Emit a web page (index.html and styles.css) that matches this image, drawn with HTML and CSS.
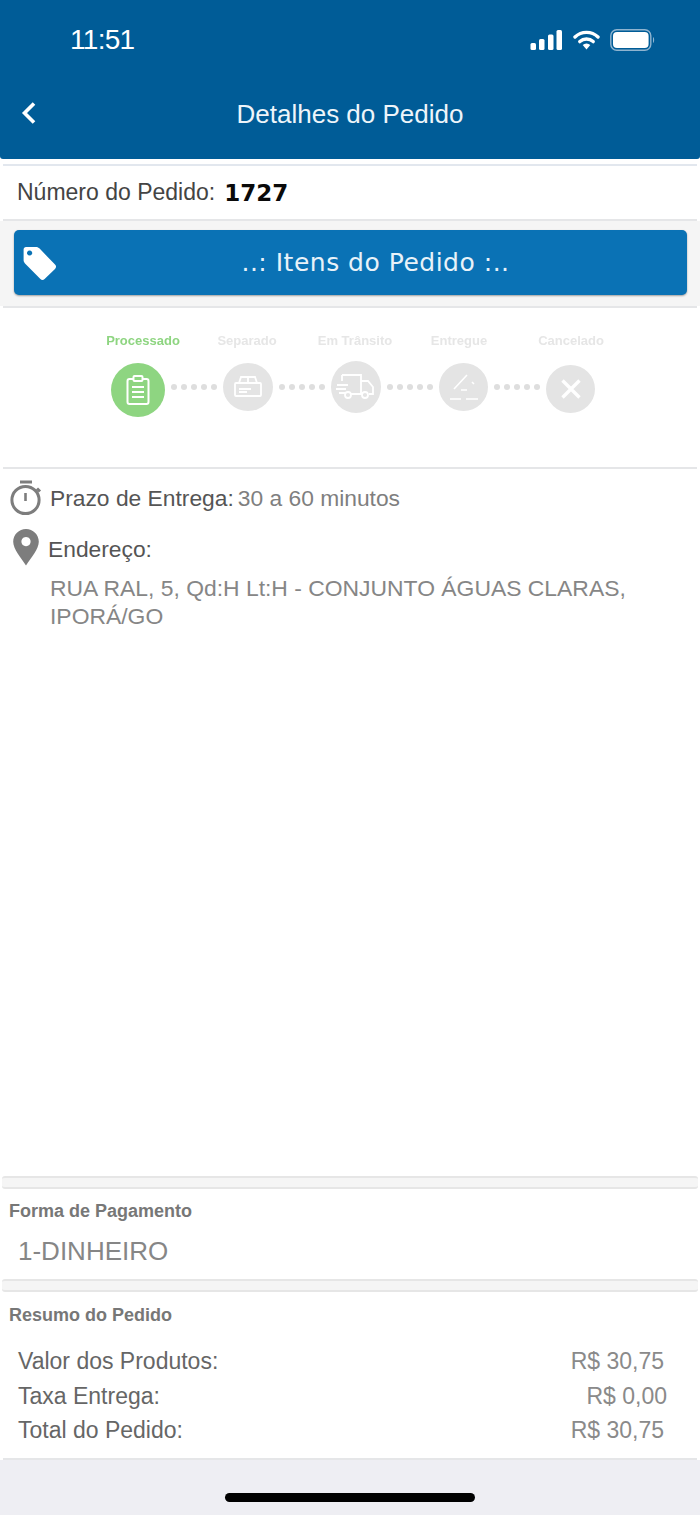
FILE: index.html
```html
<!doctype html>
<html>

<head>
  <title>Detalhes do Pedido</title>
  <meta charset="utf-8">
  <meta name="viewport" content="width=device-width">
  <link rel="stylesheet" href="styles.css">
</head>

<body>
  <div class="page">
    <div class="topbar">
      <div class="statusbar">
        <span class="clock">11:51</span>
        <div class="statusicons">
          <svg class="signal" width="33" height="20" viewBox="0 0 33 20">
            <rect x="0.5" y="13" width="5.5" height="7" rx="1.5" fill="#fff"/>
            <rect x="9" y="9" width="5.5" height="11" rx="1.5" fill="#fff"/>
            <rect x="18" y="4.5" width="5.5" height="15.5" rx="1.5" fill="#fff"/>
            <rect x="26.5" y="0" width="5.5" height="20" rx="1.5" fill="#fff"/>
          </svg>
          <svg class="wifi" width="27" height="20" viewBox="0 0 27 20">
            <path d="M2 7 A16.5 16.5 0 0 1 25 7" fill="none" stroke="#fff" stroke-width="3.4" stroke-linecap="round"/>
            <path d="M6.8 11.6 A10 10 0 0 1 20.2 11.6" fill="none" stroke="#fff" stroke-width="3.4" stroke-linecap="round"/>
            <path d="M9.7 15 L13.5 19.5 L17.3 15 A5.5 5.5 0 0 0 9.7 15 Z" fill="#fff"/>
          </svg>
          <svg class="battery" width="45" height="22" viewBox="0 0 45 22">
            <rect x="0.8" y="0.8" width="40" height="20.4" rx="6" fill="none" stroke="#8fb4d0" stroke-width="1.4"/>
            <rect x="3" y="3" width="35.6" height="16" rx="4" fill="#fff"/>
            <path d="M43 8 C44.5 8.5 44.5 13.5 43 14 Z" fill="#8fb4d0"/>
          </svg>
        </div>
      </div>
      <div class="navbar">
        <svg class="back" width="16" height="24" viewBox="0 0 16 24">
          <path d="M13 2.5 L3.5 12 L13 21.5" fill="none" stroke="#fff" stroke-width="3.6"/>
        </svg>
        <span class="navtitle">Detalhes do Pedido</span>
      </div>
    </div>

    <div class="rule first"></div>
    <div class="orderrow">
      <span class="orderlabel">Número do Pedido:</span>
      <span class="ordernum">1727</span>
    </div>
    <div class="rule"></div>

    <div class="buttonband">
      <div class="itemsbtn">
        <svg class="tag" width="36" height="36" viewBox="0 0 36 36">
          <path fill-rule="evenodd" fill="#fff" d="M4 2 H14 C15.5 2 16.6 2.6 17.6 3.6 L33 19.6 C34.4 21 34.4 22.6 33 24 L22.6 34 C21.2 35.4 19.6 35.2 18.4 34 L3 18.4 C2 17.4 1.6 16.2 1.6 15 V4.4 C1.6 3 2.6 2 4 2 Z M7.6 5.4 A2.6 2.6 0 1 0 7.62 5.4 Z"/>
        </svg>
        <span class="btntext">..: Itens do Pedido :..</span>
      </div>
    </div>
    <div class="rule"></div>

    <div class="steps">
      <div class="steplabels">
        <span class="steplabel on">Processado</span>
        <span class="steplabel">Separado</span>
        <span class="steplabel">Em Trânsito</span>
        <span class="steplabel">Entregue</span>
        <span class="steplabel">Cancelado</span>
      </div>
      <div class="track">
        <div class="circle active">
          <svg width="26" height="32" viewBox="0 0 26 32" fill="none" stroke="#fff" stroke-width="2">
            <rect x="2.5" y="5" width="21" height="25" rx="2"/>
            <rect x="8.5" y="2" width="9" height="5" rx="1" fill="#8ed581"/>
            <path d="M7 13 H19 M7 18 H19 M7 23 H19"/>
          </svg>
        </div>
        <div class="dots"><i></i><i></i><i></i><i></i><i></i></div>
        <div class="circle">
          <svg width="30" height="24" viewBox="0 0 30 24" fill="none" stroke="#fff" stroke-width="1.8">
            <path d="M6 8 L8 2 H22 L24 8"/>
            <rect x="2" y="8" width="26" height="13" rx="1"/>
            <path d="M15 2 V8 M6 14 H18 M6 17 H14"/>
          </svg>
        </div>
        <div class="dots"><i></i><i></i><i></i><i></i><i></i></div>
        <div class="circle truck">
          <svg width="40" height="28" viewBox="0 0 40 28" fill="none" stroke="#fff" stroke-width="1.8">
            <path d="M6 2 H25 V21 H15 M6 2 V8"/>
            <path d="M25 8 H32 L37 14 V21 H33"/>
            <path d="M1 12 H12 M0 16 H10 M3 20 H9"/>
            <circle cx="12" cy="22" r="3"/>
            <circle cx="29" cy="22" r="3"/>
          </svg>
        </div>
        <div class="dots"><i></i><i></i><i></i><i></i><i></i></div>
        <div class="circle narrow">
          <svg width="32" height="30" viewBox="0 0 32 30" fill="none" stroke="#fff" stroke-width="1.6">
            <path d="M6 17 L19 3 M24 10 L26 12 M13 18 H19"/>
            <path d="M2 27 H13 M18 27 H30"/>
          </svg>
        </div>
        <div class="dots"><i></i><i></i><i></i><i></i><i></i></div>
        <div class="circle cancel">
          <svg width="24" height="24" viewBox="0 0 24 24" fill="none" stroke="#fff" stroke-width="3.4">
            <path d="M3.5 3.5 L20.5 20.5 M20.5 3.5 L3.5 20.5"/>
          </svg>
        </div>
      </div>
    </div>
    <div class="rule"></div>

    <div class="info">
      <div class="inforow">
        <svg class="timer" width="36" height="36" viewBox="0 0 36 36" fill="none" stroke="#7d7d7d">
          <path d="M12 2 H24" stroke-width="3"/>
          <circle cx="17.5" cy="20" r="13.6" stroke-width="3"/>
          <path d="M17.5 13 V21" stroke-width="2.6"/>
          <path d="M29 8.5 L32 11.5" stroke-width="3"/>
        </svg>
        <span class="infolabel">Prazo de Entrega:</span>
        <span class="infovalue">30 a 60 minutos</span>
      </div>
      <div class="inforow addressrow">
        <svg class="pin" width="28" height="38" viewBox="0 0 28 38">
          <path fill-rule="evenodd" fill="#7d7d7d" d="M14 1 C21 1 26.8 6.6 26.8 13.8 C26.8 21 19 30 14 37.5 C9 30 1.2 21 1.2 13.8 C1.2 6.6 7 1 14 1 Z M14 9 A4.6 4.6 0 1 0 14.01 9 Z"/>
        </svg>
        <span class="infolabel">Endereço:</span>
      </div>
      <div class="address">RUA RAL, 5, Qd:H Lt:H - CONJUNTO ÁGUAS CLARAS, IPORÁ/GO</div>
    </div>

    <div class="separator"></div>
    <div class="section payment">
      <div class="sectiontitle">Forma de Pagamento</div>
      <div class="paymethod">1-DINHEIRO</div>
    </div>
    <div class="separator"></div>
    <div class="section summary">
      <div class="sectiontitle">Resumo do Pedido</div>
      <div class="sumrows">
        <div class="sumrow"><span>Valor dos Produtos:</span><span class="price">R$ 30,75</span></div>
        <div class="sumrow"><span>Taxa Entrega:</span><span class="price shifted">R$ 0,00</span></div>
        <div class="sumrow"><span>Total do Pedido:</span><span class="price">R$ 30,75</span></div>
      </div>
    </div>
    <div class="rule"></div>

    <div class="homearea">
      <div class="homebar"></div>
    </div>
  </div>
</body>

</html>
```

FILE: styles.css
```css
html,
body {
  margin: 0;
  padding: 0;
  background-color: #fff;
}

.page {
  display: flex;
  flex-direction: column;
  width: 700px;
  height: 1515px;
  overflow: hidden;
  font-family: "Liberation Sans", Arial, sans-serif;
}

/* header */
.topbar {
  height: 159px;
  flex: none;
  background-color: #005c97;
  color: white;
  border-radius: 0 0 3px 3px;
}

.statusbar {
  display: flex;
  justify-content: space-between;
  align-items: center;
  height: 40px;
  padding: 20px 45px 0 70px;
}

.clock {
  font-size: 28px;
  letter-spacing: -0.7px;
}

.statusicons {
  display: flex;
  align-items: center;
  gap: 10px;
}

.navbar {
  position: relative;
  display: flex;
  justify-content: center;
  align-items: center;
  height: 36px;
  margin-top: 36px;
}

.back {
  position: absolute;
  left: 21px;
  top: 5px;
}

.navtitle {
  font-size: 26px;
  color: #eef5fa;
}

/* rules and separators */
.rule {
  flex: none;
  height: 2px;
  margin: 0 3px;
  background-color: #e5e6e8;
}

.rule.first {
  margin-top: 5px;
  background-color: #e2e7ee;
}

.separator {
  flex: none;
  height: 9px;
  margin: 0 2px;
  background-color: #f5f5f5;
  border-top: 2px solid #e6e6e6;
  border-bottom: 2px solid #e6e6e6;
  border-radius: 3px;
}

/* order number */
.orderrow {
  display: flex;
  align-items: center;
  gap: 9px;
  height: 53px;
  padding-left: 17px;
  flex: none;
}

.orderlabel {
  font-size: 23px;
  color: #444;
}

.ordernum {
  font-family: "DejaVu Sans", Verdana, sans-serif;
  font-weight: bold;
  font-size: 23px;
  color: #0a0a0a;
}

/* items button */
.buttonband {
  flex: none;
  height: 85px;
  padding: 9px 13px 0 14px;
  box-sizing: border-box;
  background-color: #f5f5f5;
}

.itemsbtn {
  position: relative;
  display: flex;
  justify-content: center;
  align-items: center;
  height: 65px;
  padding-left: 50px;
  box-sizing: border-box;
  background-color: #0a72b5;
  border-radius: 5px;
  box-shadow: 0 1px 2px rgba(0, 0, 0, 0.35);
}

.tag {
  position: absolute;
  left: 8px;
  top: 15px;
}

.btntext {
  font-family: "DejaVu Sans", Verdana, sans-serif;
  font-size: 25px;
  letter-spacing: 0.5px;
  color: #e8f2f9;
}

/* progress steps */
.steps {
  flex: none;
  height: 159px;
  padding-top: 25px;
  box-sizing: border-box;
}

.steplabels {
  display: grid;
  grid-template-columns: 104px 104px 112px 96px 128px;
  padding-left: 91px;
  height: 16px;
}

.steplabel {
  text-align: center;
  font-size: 13px;
  line-height: 16px;
  font-weight: bold;
  color: #e6e6e6;
  filter: blur(0.4px);
}

.steplabel.on {
  color: #8ed581;
}

.track {
  display: flex;
  align-items: flex-start;
  margin-top: 14px;
  padding-left: 111px;
  filter: blur(0.4px);
}

.circle {
  display: flex;
  justify-content: center;
  align-items: center;
  flex: none;
  width: 50px;
  height: 48px;
  border-radius: 50%;
  background-color: #e4e4e4;
}

.circle.active {
  width: 54px;
  height: 54px;
  background-color: #8ed581;
}

.circle.truck {
  height: 52px;
  margin-top: -2px;
}

.circle.narrow {
  width: 49px;
}

.circle.cancel {
  width: 49px;
  height: 48px;
  margin-top: 2px;
}

.dots {
  display: flex;
  justify-content: space-between;
  flex: none;
  width: 46px;
  margin: 21px 6px 0 6px;
}

.dots i {
  display: block;
  width: 6px;
  height: 6px;
  border-radius: 50%;
  background-color: #dedede;
}

/* delivery info */
.info {
  flex: 1;
  padding: 10px 70px 0 8px;
}

.inforow {
  display: flex;
  align-items: center;
  height: 38px;
}

.timer {
  flex: none;
  margin-right: 6px;
}

.infolabel {
  font-size: 22.8px;
  color: #555;
}

.infovalue {
  margin-left: 4px;
  font-size: 22.8px;
  color: #7f7f7f;
}

.addressrow {
  margin-top: 13px;
}

.pin {
  flex: none;
  margin: -5px 8px 0 4px;
}

.address {
  margin-top: 6px;
  padding-left: 42px;
  font-size: 22.9px;
  line-height: 28px;
  color: #868686;
}

/* payment and summary */
.section {
  flex: none;
  box-sizing: border-box;
}

.payment {
  height: 90px;
  padding: 12px 0 0 9px;
}

.summary {
  height: 166px;
  padding: 13px 0 0 9px;
}

.sectiontitle {
  font-size: 18px;
  line-height: 20px;
  font-weight: bold;
  color: #777;
}

.paymethod {
  margin-top: 15px;
  padding-left: 9px;
  font-size: 26px;
  line-height: 30px;
  color: #868686;
}

.sumrows {
  margin-top: 19px;
  padding: 0 36px 0 9px;
}

.sumrow {
  display: flex;
  justify-content: space-between;
  height: 34.5px;
  font-size: 23px;
  line-height: 34px;
  color: #666;
}

.price {
  color: #8a8a8a;
}

.price.shifted {
  margin-right: -3px;
}

/* bottom area */
.homearea {
  flex: none;
  height: 55px;
  background-color: #eeeef3;
  padding-top: 33px;
  box-sizing: border-box;
}

.homebar {
  width: 250px;
  height: 9px;
  margin: 0 auto;
  background-color: #000;
  border-radius: 5px;
}
```
